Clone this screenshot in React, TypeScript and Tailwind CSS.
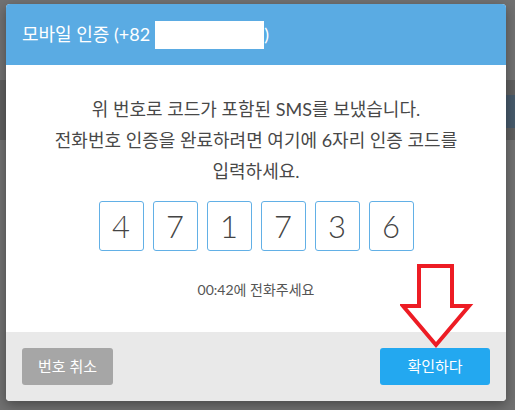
import React from "react";

const digits = ["4", "7", "1", "7", "3", "6"];

const font = { fontFamily: "Lato, 'Noto Sans CJK KR', sans-serif" };

const RedArrow = () => (
  <svg
    className="absolute left-[400px] top-[263px]"
    width="74"
    height="88"
    viewBox="0 0 74 88"
  >
    <polygon
      points="19,3 52,3 52,43 69,43 36,82 3,43 19,43"
      fill="white"
      stroke="#ed1c24"
      strokeWidth="4"
      strokeLinejoin="miter"
    />
  </svg>
);

const App = () => {
  return (
    <div className="relative w-[515px] h-[410px] overflow-hidden bg-[#717171]" style={font}>
      {/* page behind the overlay */}
      <div className="mt-[80px] h-[60px] bg-[#5f5f5f] flex justify-end">
        <div className="mt-[15px] h-[33px] w-[20px] bg-[#46596a]" />
      </div>

      {/* modal */}
      <div className="absolute left-[6px] top-[4px] w-[500px] rounded-[4px] overflow-hidden bg-white shadow-[0_4px_12px_rgba(0,0,0,0.35)]">
        <div className="h-[61px] bg-[#5aabe3] flex items-center pl-[16px]">
          <h3 className="text-[18px] text-white flex items-center">
            모바일 인증 (+82
            <span className="inline-block w-[109px] h-[28px] bg-white ml-[5px]" />
            <span>)</span>
          </h3>
        </div>

        <div className="h-[267px] flex flex-col items-center pt-[29px]">
          <p className="text-center text-[18px] leading-[31px] text-[#484848]">
            위 번호로 코드가 포함된 SMS를 보냈습니다.
            <br />
            전화번호 인증을 완료하려면 여기에 6자리 인증 코드를
            <br />
            입력하세요.
          </p>
          <div className="flex gap-[9px] mt-[14px]">
            {digits.map((d, i) => (
              <div
                key={i}
                className="w-[45px] h-[50px] border border-[#62b0e6] rounded-[3px] flex items-center justify-center text-[31px] text-[#444] font-light"
              >
                {d}
              </div>
            ))}
          </div>
          <p className="mt-[28px] text-[14px] text-[#555]">00:42에 전화주세요</p>
        </div>

        <div className="h-[69px] bg-[#e9e9e9] flex justify-between items-start px-[16px] pt-[16px]">
          <button className="w-[91px] h-[37px] rounded-[3px] bg-[#a6a6a6] text-white text-[15px]">
            번호 취소
          </button>
          <button className="w-[110px] h-[37px] rounded-[3px] bg-[#23a8f0] text-white text-[15px]">
            확인하다
          </button>
        </div>
      </div>

      <RedArrow />
    </div>
  );
};

export default App;
